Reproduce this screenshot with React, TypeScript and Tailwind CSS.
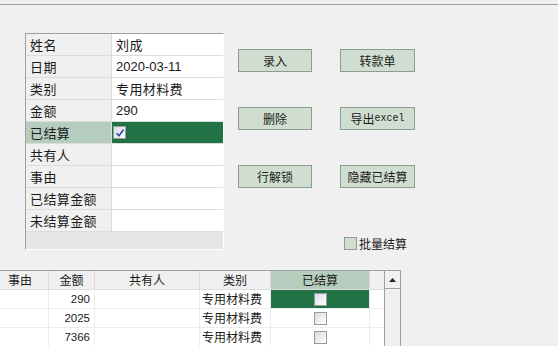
import React from 'react';

const cjk = { fontFamily: '"Noto Sans CJK SC", "Liberation Sans", sans-serif' };
const mono = { fontFamily: '"Liberation Mono", "Noto Sans CJK SC", monospace' };
const sans = { fontFamily: '"Liberation Sans", "Noto Sans CJK SC", sans-serif' };

const formRows: Array<{ label: string; value?: string; digits?: boolean; checked?: boolean }> = [
  { label: '姓名', value: '刘成' },
  { label: '日期', value: '2020-03-11', digits: true },
  { label: '类别', value: '专用材料费' },
  { label: '金额', value: '290', digits: true },
  { label: '已结算', checked: true },
  { label: '共有人' },
  { label: '事由' },
  { label: '已结算金额' },
  { label: '未结算金额' },
];

const tableRows = [
  { amount: '290', kind: '专用材料费', selected: true },
  { amount: '2025', kind: '专用材料费', selected: false },
  { amount: '7366', kind: '专用材料费', selected: false },
];

function Check({ checked }: { checked?: boolean }) {
  return (
    <div className="flex h-[13px] w-[13px] items-center justify-center border border-[#9a9a9a] bg-gradient-to-br from-[#d8dce2] to-[#ffffff]">
      {checked ? (
        <svg width="10" height="10" viewBox="0 0 10 10">
          <path d="M1.5 5.2 L4 7.8 L8.6 1.6" fill="none" stroke="#2446b8" strokeWidth="1.6" />
        </svg>
      ) : null}
    </div>
  );
}

function Btn({ children }: { children: React.ReactNode }) {
  return (
    <div className="flex h-[23px] items-center justify-center border border-[#8b9e8d] bg-[#d0ded1] text-[12px] text-[#1a1a1a]" style={cjk}>
      {children}
    </div>
  );
}

export default function App() {
  return (
    <div className="h-[346px] w-[558px] overflow-hidden bg-[#f0f0f0]" style={cjk}>
      <div className="h-[4px]" />
      <div className="h-px bg-[#a0a0a0]" />

      <div className="flex h-[245px] items-start pl-[25px] pt-[28px]">
        {/* detail grid */}
        <div className="flex h-[217px] w-[199px] flex-col border-b border-l border-r border-t border-b-white border-l-[#a0a0a0] border-r-white border-t-[#a0a0a0] bg-[#e4e5e6]">
          {formRows.map((row) => (
            <div key={row.label} className="flex h-[22px] border-b border-[#dcdcdc]">
              <div
                className={`w-[86px] border-r border-[#dcdcdc] pl-[4px] text-[13px] leading-[21px] tracking-[0.4px] text-[#1a1a1a] ${row.checked ? 'bg-[#b4cdbf]' : 'bg-[#f0f0f0]'}`}
              >
                {row.label}
              </div>
              <div
                className={`flex flex-1 items-center text-[13px] leading-[21px] tracking-[0.4px] text-[#1a1a1a] ${row.checked ? 'bg-[#217346] pl-[1px]' : 'bg-white pl-[4px]'}`}
              >
                {row.checked ? (
                  <Check checked />
                ) : row.digits ? (
                  <span className="tracking-normal" style={sans}>{row.value}</span>
                ) : (
                  row.value
                )}
              </div>
            </div>
          ))}
        </div>

        {/* buttons */}
        <div className="ml-[14px] pt-[16px]">
          <div className="grid grid-cols-[74px_75px] gap-x-[28px] gap-y-[35px]">
            <Btn>录入</Btn>
            <Btn>转款单</Btn>
            <Btn>删除</Btn>
            <Btn>
              导出<span className="text-[10px]" style={mono}>excel</span>
            </Btn>
            <Btn>行解锁</Btn>
            <Btn>隐藏已结算</Btn>
          </div>
          <div className="ml-[106px] mt-[47px] flex h-[17px] items-center gap-[2px]">
            <div className="h-[13px] w-[13px] border border-[#8b9e8d] bg-[#d0ded1]" />
            <span className="text-[12px] leading-[17px] text-[#1a1a1a]">批量结算</span>
          </div>
        </div>
      </div>

      {/* list */}
      <div className="mt-[20px] flex w-[401px] border-t border-[#a0a0a0]">
        <div className="flex-1">
          <div className="grid h-[19px] grid-cols-[49px_46px_105px_71px_99px_14px] border-b border-[#dcdcdc] text-[12px] leading-[18px] text-[#1a1a1a]">
            <div className="border-r border-[#dcdcdc] pl-[8px]">事由</div>
            <div className="border-r border-[#dcdcdc] text-center">金额</div>
            <div className="border-r border-[#dcdcdc] text-center">共有人</div>
            <div className="border-r border-[#dcdcdc] text-center">类别</div>
            <div className="border-r border-[#dcdcdc] bg-[#b4cdbf] text-center">已结算</div>
            <div />
          </div>
          {tableRows.map((r) => (
            <div
              key={r.amount}
              className="grid h-[19px] grid-cols-[49px_46px_105px_71px_99px_14px] border-b border-[#ececec] bg-white text-[12px] leading-[18px] text-[#1a1a1a]"
            >
              <div className="border-r border-[#ececec]" />
              <div className="border-r border-[#ececec] pr-[4px] text-right text-[11.5px]" style={sans}>{r.amount}</div>
              <div className="border-r border-[#ececec]" />
              <div className="border-r border-[#ececec] pl-[2px]">{r.kind}</div>
              <div className={`flex items-center justify-center border-r border-[#ececec] ${r.selected ? 'bg-[#217346]' : ''}`}>
                <Check />
              </div>
              <div />
            </div>
          ))}
        </div>
        {/* scrollbar */}
        <div className="w-[17px] border-l border-r border-[#a0a0a0] bg-[#f0f0f0]">
          <div className="flex h-[18px] items-center justify-center border-b border-[#a0a0a0]">
            <svg width="7" height="4" viewBox="0 0 7 4">
              <path d="M0 4 L3.5 0 L7 4 Z" fill="#222" />
            </svg>
          </div>
        </div>
      </div>
    </div>
  );
}
